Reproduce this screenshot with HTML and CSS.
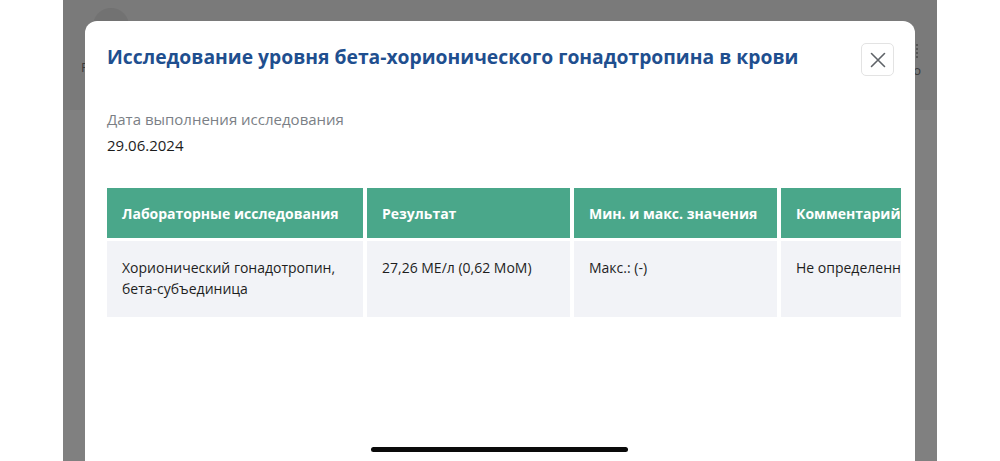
FILE: index.html
```html
<!DOCTYPE html>
<html lang="ru">
<head>
<meta charset="utf-8">
<link rel="stylesheet" href="styles.css">
</head>
<body>
<div class="screen">
  <div class="app">
    <div class="app-header">
      <div class="avatar"></div>
      <span class="hdr-left">Р</span>
      <div class="hdr-right"><span class="dots"></span><span class="hdr-o">о</span></div>
    </div>
    <div class="app-body"></div>
  </div>
  <div class="modal">
    <div class="modal-head">
      <h1 class="modal-title">Исследование уровня бета-хорионического гонадотропина в крови</h1>
      <button class="close" aria-label="Закрыть">
        <svg width="16" height="16" viewBox="0 0 16 16"><path d="M1.5 1.5L14.5 14.5M14.5 1.5L1.5 14.5" stroke="#5f6368" stroke-width="1.6" fill="none" stroke-linecap="round"/></svg>
      </button>
    </div>
    <div class="field">
      <div class="field-label">Дата выполнения исследования</div>
      <div class="field-value">29.06.2024</div>
    </div>
    <div class="table-wrap">
      <div class="table">
        <div class="th c1">Лабораторные исследования</div>
        <div class="th c2">Результат</div>
        <div class="th c3">Мин. и макс. значения</div>
        <div class="th c4">Комментарий</div>
        <div class="td c1">Хорионический гонадотропин, бета-субъединица</div>
        <div class="td c2">27,26 МЕ/л (0,62 МоМ)</div>
        <div class="td c3">Макс.: (-)</div>
        <div class="td c4">Не определенный</div>
      </div>
    </div>
  </div>
  <div class="home-indicator"></div>
</div>
</body>
</html>
```
FILE: styles.css
```css
* { box-sizing: border-box; }
html, body { margin: 0; padding: 0; }
body {
  width: 1000px;
  height: 461px;
  overflow: hidden;
  background: #ffffff;
  font-family: "Open Sans", "Noto Sans", sans-serif;
  display: flex;
  justify-content: center;
}
.screen {
  position: relative;
  width: 874px;
  height: 461px;
  overflow: hidden;
}
.app {
  display: flex;
  flex-direction: column;
  height: 100%;
}
.app-header {
  height: 110px;
  background: #7a7a7a;
  display: flex;
  align-items: center;
  padding: 0 16px 0 18px;
  position: relative;
}
.avatar {
  position: absolute;
  left: 30px;
  top: 8px;
  width: 36px;
  height: 36px;
  border-radius: 50%;
  background: #727272;
}
.hdr-left {
  color: #3a3a3a;
  font-size: 13px;
  margin-top: 24px;
}
.hdr-right {
  margin-left: auto;
  display: flex;
  flex-direction: column;
  align-items: center;
  gap: 6px;
  margin-top: 10px;
}
.dots {
  width: 2px;
  height: 14px;
  border-left: 2px dotted #555;
}
.hdr-o {
  color: #3a3a3a;
  font-size: 13px;
  line-height: 12px;
}
.app-body {
  flex: 1;
  background: #808080;
}
.modal {
  position: absolute;
  left: 22px;
  top: 21px;
  width: 830px;
  height: 460px;
  background: #ffffff;
  border-radius: 12px;
  padding: 22px 22px 0 22px;
}
.modal-head {
  display: flex;
  align-items: flex-start;
  justify-content: space-between;
}
.modal-title {
  margin: 0;
  padding-top: 0;
  font-size: 19.3px;
  line-height: 27px;
  font-weight: 700;
  color: #1f4f8f;
  letter-spacing: 0;
}
.close {
  width: 33px;
  height: 33px;
  margin-right: -1px;
  border: 1px solid #e3e3e3;
  border-radius: 5px;
  background: #fff;
  display: flex;
  align-items: center;
  justify-content: center;
  padding: 0;
}
.field {
  margin-top: 33px;
}
.field-label {
  font-size: 15px;
  line-height: 20px;
  color: #7b7f86;
}
.field-value {
  margin-top: 6px;
  font-size: 15px;
  line-height: 20px;
  color: #1c1c1c;
}
.table-wrap {
  margin-top: 33px;
  width: 794px;
  overflow: hidden;
}
.table {
  display: grid;
  grid-template-columns: 256px 203px 203px 203px;
  column-gap: 4px;
  row-gap: 3px;
  width: 884px;
}
.th {
  background: #4aa78a;
  color: #ffffff;
  font-weight: 700;
  font-size: 14px;
  height: 50px;
  display: flex;
  align-items: center;
  padding: 0 15px;
  white-space: nowrap;
}
.td {
  background: #f2f3f7;
  color: #1e1e1e;
  font-size: 14px;
  line-height: 21px;
  height: 76px;
  padding: 16px 15px 0 15px;
}
.td.c4 { white-space: nowrap; }
.home-indicator {
  position: absolute;
  left: 308px;
  top: 447px;
  width: 257px;
  height: 5px;
  border-radius: 3px;
  background: #0a0a0a;
}
```
